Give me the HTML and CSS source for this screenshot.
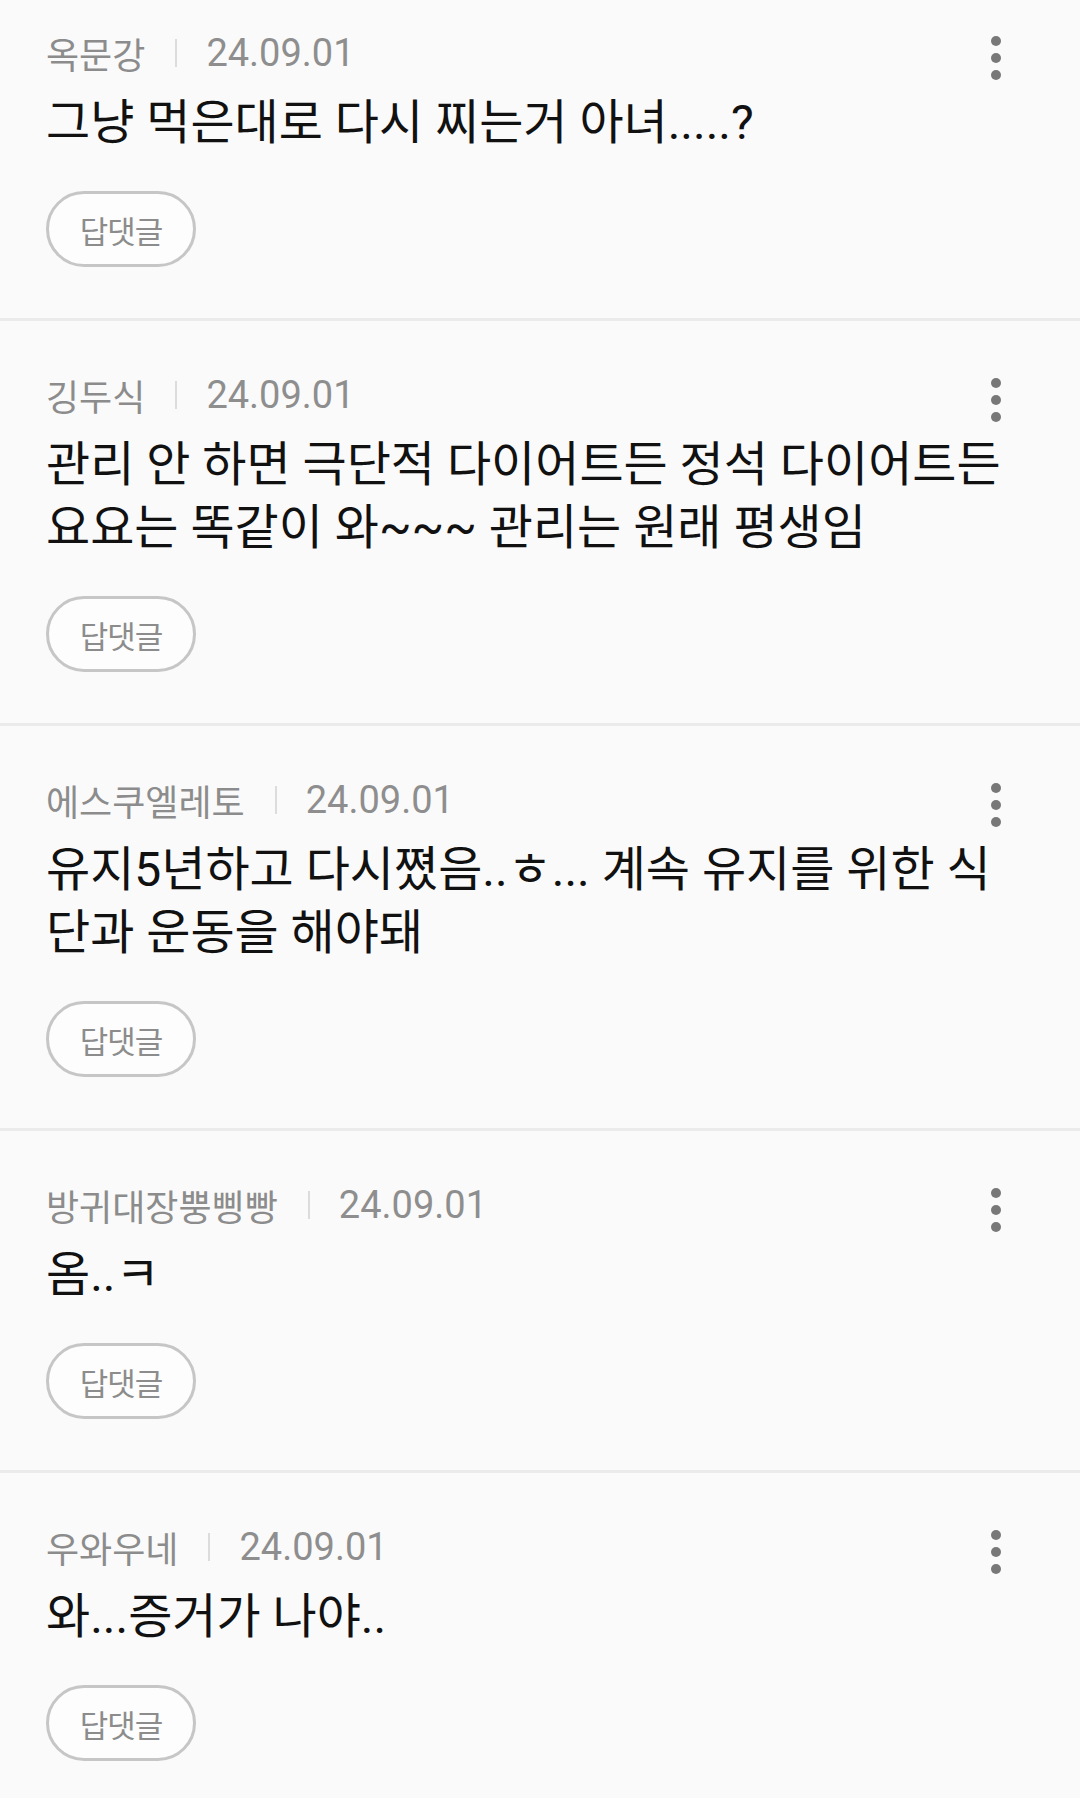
FILE: index.html
```html
<!DOCTYPE html>
<html lang="ko">
<head>
<meta charset="utf-8">
<link rel="stylesheet" href="styles.css">
</head>
<body>
<div class="list">
  <div class="card">
    <div class="meta">
      <span class="name">옥문강</span><span class="sep"></span><span class="date">24.09.01</span>
      <span class="kebab"><i></i><i></i><i></i></span>
    </div>
    <p class="body">그냥 먹은대로 다시 찌는거 아녀.....?</p>
    <button class="reply">답댓글</button>
  </div>
  <div class="card">
    <div class="meta">
      <span class="name">깅두식</span><span class="sep"></span><span class="date">24.09.01</span>
      <span class="kebab"><i></i><i></i><i></i></span>
    </div>
    <p class="body">관리 안 하면 극단적 다이어트든 정석 다이어트든 요요는 똑같이 와~~~ 관리는 원래 평생임</p>
    <button class="reply">답댓글</button>
  </div>
  <div class="card">
    <div class="meta">
      <span class="name">에스쿠엘레토</span><span class="sep"></span><span class="date">24.09.01</span>
      <span class="kebab"><i></i><i></i><i></i></span>
    </div>
    <p class="body">유지5년하고 다시쪘음..ㅎ... 계속 유지를 위한 식단과 운동을 해야돼</p>
    <button class="reply">답댓글</button>
  </div>
  <div class="card">
    <div class="meta">
      <span class="name">방귀대장뿡삥빵</span><span class="sep"></span><span class="date">24.09.01</span>
      <span class="kebab"><i></i><i></i><i></i></span>
    </div>
    <p class="body">옴..ㅋ</p>
    <button class="reply">답댓글</button>
  </div>
  <div class="card">
    <div class="meta">
      <span class="name">우와우네</span><span class="sep"></span><span class="date">24.09.01</span>
      <span class="kebab"><i></i><i></i><i></i></span>
    </div>
    <p class="body">와...증거가 나야..</p>
    <button class="reply">답댓글</button>
  </div>
</div>
</body>
</html>
```
FILE: styles.css
```css
html, body {
  margin: 0;
  padding: 0;
  background: #fafafa;
}
body {
  font-family: Roboto, "Noto Sans CJK KR", sans-serif;
  overflow: hidden;
}
.list {
  margin-top: -21px;
}
.card {
  padding: 52px 46px 51px 46px;
  border-bottom: 3px solid #ebebeb;
}
.meta {
  display: flex;
  align-items: center;
  height: 44px;
  font-size: 36px;
  color: #8c8c8c;
}
.sep {
  width: 2px;
  height: 28px;
  background: #dcdcdc;
  margin: 0 29px 0 30px;
}
.date {
  font-size: 38px;
  color: #8e8e8e;
}
.kebab {
  margin-left: auto;
  margin-right: 26px;
  width: 24px;
  display: flex;
  flex-direction: column;
  align-items: center;
  gap: 7px;
  padding-top: 10px;
}
.kebab i {
  display: block;
  width: 10px;
  height: 10px;
  border-radius: 50%;
  background: #787878;
}
.body {
  margin: 16px 0 37px 0;
  padding-right: 26px;
  font-size: 48px;
  line-height: 63px;
  color: #111;
}
.reply {
  display: block;
  width: 150px;
  height: 76px;
  border: 3px solid #c6c6c6;
  border-radius: 38px;
  background: #fdfdfd;
  color: #8c8c8c;
  font-family: "Noto Sans CJK KR", sans-serif;
  font-size: 31px;
  letter-spacing: -1px;
  padding: 0;
}
```
